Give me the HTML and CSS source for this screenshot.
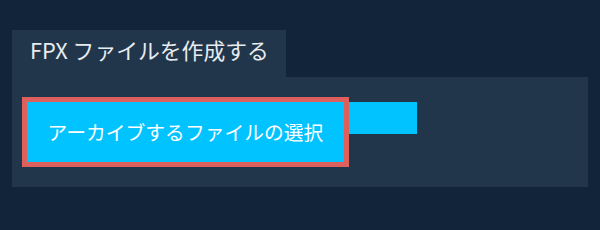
FILE: index.html
```html
<!DOCTYPE html>
<html lang="ja">
<head>
<meta charset="utf-8">
<link rel="stylesheet" href="styles.css">
</head>
<body>
<div class="card">
  <div class="tab">FPX ファイルを作成する</div>
  <div class="panel">
    <div class="row">
      <button class="pick">アーカイブするファイルの選択</button>
      <div class="bar"></div>
    </div>
  </div>
</div>
</body>
</html>
```
FILE: styles.css
```css
html, body {
  margin: 0;
  padding: 0;
  background: #12243a;
}
body {
  width: 600px;
  height: 230px;
  box-sizing: border-box;
  padding: 30px 12px 0 12px;
  font-family: "Noto Sans CJK JP", "Noto Sans", sans-serif;
}
.tab {
  display: inline-block;
  width: 274px;
  height: 47px;
  box-sizing: border-box;
  padding: 5px 0 0 18px;
  background: #22364b;
  color: #e8ecef;
  font-size: 21.8px;
  line-height: 30px;
  vertical-align: top;
}
.panel {
  height: 110px;
  box-sizing: border-box;
  padding: 20px 10px;
  background: #22364b;
}
.row {
  display: flex;
  align-items: flex-start;
}
.pick {
  width: 327px;
  height: 70px;
  box-sizing: border-box;
  border: 5px solid #dd605c;
  background: #00c3ff;
  color: #ffffff;
  font-family: "Noto Sans CJK JP", "Noto Sans", sans-serif;
  font-size: 19.8px;
  padding: 0;
  margin: 0;
  line-height: 28px;
}
.bar {
  width: 68px;
  height: 32px;
  margin-top: 5px;
  background: #00c3ff;
}
```
